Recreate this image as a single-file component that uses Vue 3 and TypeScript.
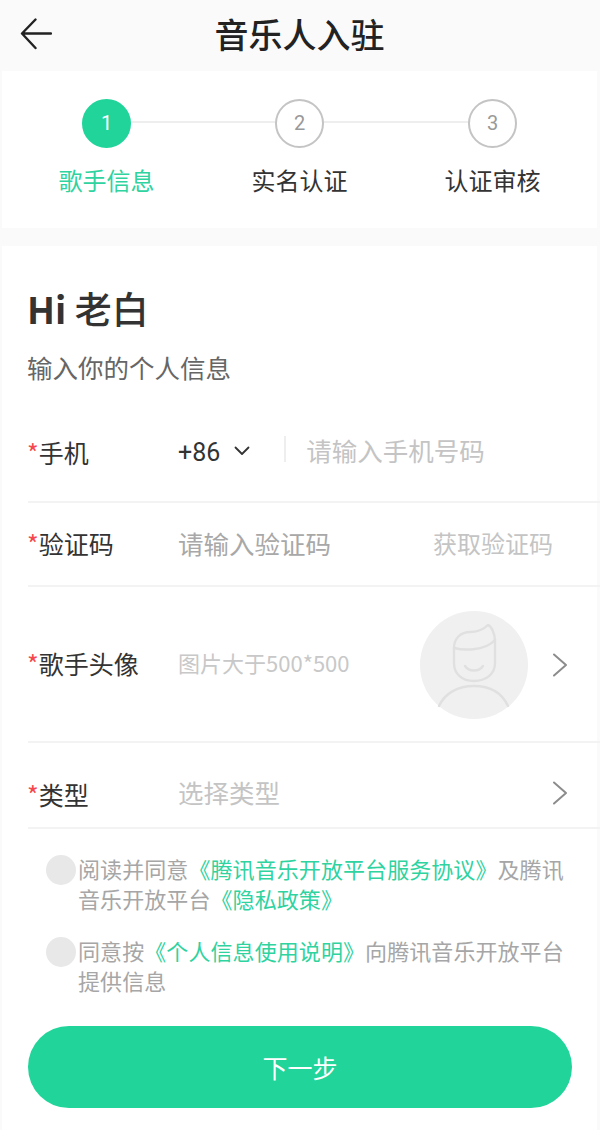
<script setup lang="ts">
const steps = [
  { n: 1, label: '歌手信息', active: true },
  { n: 2, label: '实名认证', active: false },
  { n: 3, label: '认证审核', active: false },
]
</script>

<template>
  <div class="page">
    <header class="header">
      <svg class="back" width="32" height="34" viewBox="0 0 32 34" fill="none" stroke="#222" stroke-width="2.4" stroke-linecap="round" stroke-linejoin="round">
        <path d="M3 16.5H31M15.5 2.5 2 16.5 15.5 31" />
      </svg>
      <h1>音乐人入驻</h1>
    </header>

    <section class="steps">
      <div class="track"></div>
      <div v-for="s in steps" :key="s.n" class="step" :class="{ active: s.active }">
        <div class="dot">{{ s.n }}</div>
        <div class="step-label">{{ s.label }}</div>
      </div>
    </section>

    <main class="card">
      <div class="hi">Hi <span>老白</span></div>
      <div class="sub">输入你的个人信息</div>

      <div class="row row-phone">
        <label class="label"><i>*</i>手机</label>
        <span class="code">+86</span>
        <svg class="caret" width="16" height="10" viewBox="0 0 16 10" fill="none" stroke="#333" stroke-width="1.8" stroke-linecap="round" stroke-linejoin="round">
          <path d="M1.5 1.5 8 8l6.5-6.5" />
        </svg>
        <span class="sep"></span>
        <span class="ph">请输入手机号码</span>
      </div>

      <div class="row row-code">
        <label class="label"><i>*</i>验证码</label>
        <span class="ph grow">请输入验证码</span>
        <span class="get">获取验证码</span>
      </div>

      <div class="row row-avatar">
        <label class="label"><i>*</i>歌手头像</label>
        <span class="ph small grow">图片大于500*500</span>
        <svg class="avatar" width="108" height="108" viewBox="0 0 108 108" fill="none">
          <circle cx="54" cy="54" r="54" fill="#f0f0f0" />
          <g stroke="#e0e0e0" stroke-width="2.4" stroke-linecap="round" stroke-linejoin="round">
            <path d="M34 37V52C34 63 42 70 54 70S75 63 75 52V30C75 22 71 15 68 14 63 19 57 21 50 21 41 21 34 27 34 37Z" />
            <path d="M34 37C42 39 64 41 75 29" />
            <path d="M45 55C49 61 59 61 63 55" />
            <path d="M19 95C25 82 38 75 54 75S82 82 88 95" />
          </g>
        </svg>
        <svg class="chev" width="16" height="24" viewBox="0 0 16 24" fill="none" stroke="#8c8c8c" stroke-width="2" stroke-linecap="round" stroke-linejoin="round">
          <path d="M2 1.5 14 12 2 22.5" />
        </svg>
      </div>

      <div class="row row-type">
        <label class="label"><i>*</i>类型</label>
        <span class="ph grow">选择类型</span>
        <svg class="chev" width="16" height="24" viewBox="0 0 16 24" fill="none" stroke="#8c8c8c" stroke-width="2" stroke-linecap="round" stroke-linejoin="round">
          <path d="M2 1.5 14 12 2 22.5" />
        </svg>
      </div>

      <div class="agree first">
        <span class="radio"></span>
        <p>阅读并同意<b>《腾讯音乐开放平台服务协议》</b>及腾讯<br />音乐开放平台<b>《隐私政策》</b></p>
      </div>
      <div class="agree">
        <span class="radio"></span>
        <p>同意按<b>《个人信息使用说明》</b>向腾讯音乐开放平台<br />提供信息</p>
      </div>

      <button class="next" type="button">下一步</button>
    </main>
  </div>
</template>

<style>
html, body { margin: 0; background: #fafafa; }
</style>

<style scoped>
.page {
  width: 600px;
  height: 1130px;
  overflow: hidden;
  background: #fafafa;
  font-family: "Noto Sans CJK SC", "Noto Sans", sans-serif;
  color: #333;
  box-sizing: border-box;
  padding: 0 3px 0 2px;
}
.header {
  height: 71px;
  position: relative;
  display: flex;
  align-items: center;
  justify-content: center;
}
.back { position: absolute; left: 18px; top: 17px; }
h1 {
  margin: -4px 0 0 0;
  font-size: 34px;
  font-weight: 500;
  color: #222;
  line-height: 71px;
}
.steps {
  position: relative;
  height: 157px;
  background: #fff;
  display: grid;
  grid-template-columns: repeat(3, 193px);
  justify-content: center;
  padding-top: 28px;
  box-sizing: border-box;
}
.track {
  position: absolute;
  left: 120px;
  right: 100px;
  top: 50px;
  height: 2px;
  background: #eee;
}
.step { position: relative; display: flex; flex-direction: column; align-items: center; }
.dot {
  width: 49px;
  height: 49px;
  box-sizing: border-box;
  border: 2px solid #c4c4c4;
  border-radius: 50%;
  background: #fff;
  color: #999;
  font: 20px/45px "Roboto", sans-serif;
  text-align: center;
}
.step.active .dot { background: #20d49a; border-color: #20d49a; color: #fff; }
.step-label { margin-top: 14px; font-size: 24px; line-height: 36px; color: #333; }
.step.active .step-label { color: #2fd3a0; }
.card {
  margin-top: 18px;
  background: #fff;
  height: 884px;
  padding: 37px 0 0 26px;
  box-sizing: border-box;
}
.hi { font-size: 37px; font-weight: 700; line-height: 50px; color: #333; margin-left: -1px; }
.hi span { font-weight: 500; }
.sub { margin-top: 16px; font-size: 25.5px; line-height: 36px; color: #666; margin-left: -1px; }
.row {
  display: flex;
  align-items: center;
  border-bottom: 2px solid #f3f3f3;
  box-sizing: border-box;
  margin-right: -3px;
}
.row-phone { height: 92px; margin-top: 26px; padding-bottom: 8px; }
.row-code { height: 84px; padding-bottom: 4px; }
.row-avatar { height: 156px; padding-top: 2px; }
.row-type { height: 86px; padding-top: 16px; }
.label { width: 150px; flex: none; font-size: 25px; color: #333; line-height: 36px; }
.row-type .label { margin-bottom: -2px; }
.row-code .label { margin-top: 2px; }
.row-avatar .label { margin-bottom: 4px; }
.label i { font-style: normal; color: #f5474d; margin-left: -1px; }
.code { font-size: 25px; color: #333; font-family: "Roboto", sans-serif; }
.caret { margin-left: 14px; margin-bottom: 3px; }
.sep { width: 2px; height: 26px; background: #eee; margin: 0 20px 0 34px; }
.ph { font-size: 25.5px; color: #c4c4c4; }
.row-phone .sep, .row-phone .ph { position: relative; top: -3px; }
.row-code .ph { color: #a8a8a8; }
.row-type .ph { margin-bottom: 4px; }
.ph.small { font-size: 22px; color: #c8c8c8; margin-bottom: 6px; }
.grow { flex: 1; }
.get { font-size: 24px; color: #c4c4c4; margin-right: 47px; }
.avatar { flex: none; margin-right: 24px; }
.row-avatar .chev { margin-right: 32px; }
.chev { flex: none; margin-right: 32px; }
.agree { display: flex; margin: 0 30px 0 18px; }
.agree.first { margin-top: 24px; }
.agree + .agree { margin-top: 22px; }
.radio {
  flex: none;
  width: 30px;
  height: 30px;
  border-radius: 50%;
  background: #e8e8e8;
  margin-top: 2px;
  margin-right: 2px;
}
.agree p { margin: 0; font-size: 22px; line-height: 30px; color: #a6a6a6; white-space: nowrap; letter-spacing: 0.08px; }
.agree b { font-weight: 400; color: #2fd3a0; }
.next {
  display: block;
  width: 544px;
  height: 82px;
  margin-top: 31px;
  border: 0;
  border-radius: 41px;
  background: #20d49a;
  color: #fff;
  font: 400 25px "Noto Sans CJK SC", sans-serif;
}
</style>
